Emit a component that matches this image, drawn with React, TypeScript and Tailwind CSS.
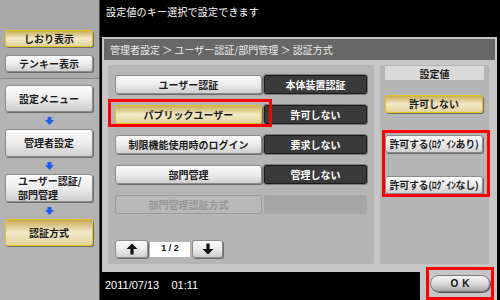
import React from "react"

const btn =
  "flex items-center justify-center rounded-[3px] border border-[#8c8c8c] bg-gradient-to-b from-[#fbfbfb] via-[#ececec] to-[#cfcfcf] shadow-[1px_1px_0_#6e6e6e] text-[10px] font-bold text-[#1c1c1c] leading-none whitespace-nowrap"
const gold =
  "flex items-center justify-center rounded-[3px] border border-[#e8c21c] bg-gradient-to-b from-[#c9ad55] via-[#f1e8c6] to-[#e4d59c] shadow-[1px_1px_0_#6e6e6e] text-[10px] font-bold text-[#1c1c1c] leading-none whitespace-nowrap"
const cell =
  "flex items-center justify-center rounded-[2px] border border-[#1a1a1a] outline outline-1 outline-[#7a7a7a] bg-[#3a3a3a] text-[10px] font-bold text-white leading-none whitespace-nowrap"

function BlueArrow() {
  return (
    <div className="h-[17px] flex items-center justify-center">
      <svg width="9" height="8" viewBox="0 0 9 8">
        <rect x="2.5" y="0" width="4" height="3" fill="#1f5fe8" />
        <polygon points="0,3 9,3 4.5,8" fill="#1f5fe8" />
      </svg>
    </div>
  )
}

function Arrow({ up }: { up?: boolean }) {
  return (
    <svg width="12" height="12" viewBox="0 0 12 12">
      {up ? (
        <path d="M6 0.5 L11.5 6 L7.6 6 L7.6 11.5 L4.4 11.5 L4.4 6 L0.5 6 Z" fill="#111" />
      ) : (
        <path d="M6 11.5 L11.5 6 L7.6 6 L7.6 0.5 L4.4 0.5 L4.4 6 L0.5 6 Z" fill="#111" />
      )}
    </svg>
  )
}

const rows = [
  { label: "ユーザー認証", value: "本体装置認証" },
  { label: "パブリックユーザー", value: "許可しない", active: true },
  { label: "制限機能使用時のログイン", value: "要求しない" },
  { label: "部門管理", value: "管理しない" },
]

export default function App() {
  return (
    <div className="w-[500px] h-[300px] flex overflow-hidden font-['Noto_Sans_CJK_JP','Liberation_Sans',sans-serif] select-none">
      {/* left menu */}
      <aside className="w-[100px] h-full flex flex-col bg-[#b4b4b4] border-r border-[#4a4a4a]">
        <div className="h-[79px] flex flex-col gap-[8px] pt-[30px] px-[5px] bg-[#a9a9a9] border-b border-[#8a8a8a]">
          <div className={`${gold} w-[88px] h-[17px]`}>しおり表示</div>
          <div className={`${btn} w-[88px] h-[17px]`}>テンキー表示</div>
        </div>
        <div className="flex flex-col px-[5px] pt-[6px]">
          <div className={`${btn} w-[88px] h-[27px]`}>設定メニュー</div>
          <BlueArrow />
          <div className={`${btn} w-[88px] h-[28px]`}>管理者設定</div>
          <BlueArrow />
          <div className={`${btn} w-[88px] h-[28px] !justify-start pl-[12px]`}>
            <div className="flex flex-col leading-[14px]">
              <span>ユーザー認証/</span>
              <span>部門管理</span>
            </div>
          </div>
          <BlueArrow />
          <div className={`${gold} w-[88px] h-[27px]`}>認証方式</div>
        </div>
      </aside>

      {/* main */}
      <main className="w-[400px] h-full bg-black flex flex-col">
        <div className="h-[37px] pl-[6px] pt-[4px] text-[10px] text-white tracking-[0.2px]">
          設定値のキー選択で設定できます
        </div>

        <section className="ml-[2px] w-[395px] h-[235px] bg-[#c6c6c6] p-[2px] flex flex-col">
          <div className="h-[21px] bg-[#676767] pl-[6px] flex items-center text-[10px] text-[#ececec]">
            管理者設定 ＞ ユーザー認証/部門管理 ＞ 認証方式
          </div>
          <div className="flex pl-[4px] pt-[5px] gap-[6px]">
            {/* settings list */}
            <div className="relative w-[266px] h-[199px] rounded-[3px] bg-[#b5b5b5] px-[7px] pt-[10px] pb-[6px] flex flex-col">
              <div className="flex flex-col gap-[11px]">
                {rows.map((r) => (
                  <div key={r.label} className="flex gap-[2px]">
                    <div className={`${r.active ? gold : btn} w-[148px] h-[19px]`}>{r.label}</div>
                    <div className={`${cell} w-[104px] h-[19px]`}>{r.value}</div>
                  </div>
                ))}
                <div className="flex gap-[2px]">
                  <div className="w-[148px] h-[19px] rounded-[3px] border border-[#9c9c9c] bg-[#b9b9b9] flex items-center justify-center text-[10px] font-bold text-[#979797] leading-none">
                    部門管理認証方式
                  </div>
                  <div className="w-[104px] h-[19px] rounded-[2px] bg-[#a6a6a6]" />
                </div>
              </div>
              <div className="mt-auto flex items-center gap-[2px]">
                <div className={`${btn} w-[33px] h-[18px]`}><Arrow up /></div>
                <div className="w-[40px] h-[15px] bg-white flex items-center justify-center text-[9px] font-bold text-[#111] font-['Liberation_Sans',sans-serif]">1 / 2</div>
                <div className={`${btn} w-[31px] h-[18px]`}><Arrow /></div>
              </div>
              <div className="absolute left-0 top-[34px] w-[164px] h-[28px] border-[3px] border-[#ff0000]" />
            </div>

            {/* values */}
            <div className="relative w-[109px] h-[199px] rounded-[3px] bg-[#b5b5b5] px-[5px] pt-[1px] flex flex-col">
              <div className="h-[14px] bg-[#dadada] flex items-center justify-center text-[10px] font-bold text-[#1c1c1c]">
                設定値
              </div>
              <div className={`${gold} w-[98px] h-[18px] mt-[15px]`}>許可しない</div>
              <div className={`${btn} w-[98px] h-[18px] mt-[22px] tracking-[-0.3px]`}>許可する(ﾛｸﾞｲﾝあり)</div>
              <div className={`${btn} w-[98px] h-[18px] mt-[23px] tracking-[-0.3px]`}>許可する(ﾛｸﾞｲﾝなし)</div>
              <div className="absolute left-[2px] top-[65px] w-[108px] h-[67px] border-[3px] border-[#ff0000]" />
            </div>
          </div>
        </section>

        <div className="flex-1 flex">
          <div className="pl-[5px] pt-[5px] text-[11px] text-white font-['Liberation_Sans',sans-serif] whitespace-pre">
            2011/07/13    01:11
          </div>
          <div className="relative ml-auto mr-[3px] w-[77px] h-full bg-[#c6c6c6] pl-[10px] pt-[3px]">
            <div className="w-[60px] h-[17px] rounded-full border border-[#7a7a7a] bg-gradient-to-b from-[#f4f4f4] via-[#dcdcdc] to-[#a9a9a9] shadow-[1px_1px_0_#555] flex items-center justify-center text-[10px] font-bold text-[#111] tracking-[4px] pl-[4px] font-['Liberation_Sans',sans-serif]">
              OK
            </div>
            <div className="absolute left-[6px] -top-[5px] w-[68px] h-[33px] border-[3px] border-[#ff0000]" />
          </div>
        </div>
      </main>
    </div>
  )
}
